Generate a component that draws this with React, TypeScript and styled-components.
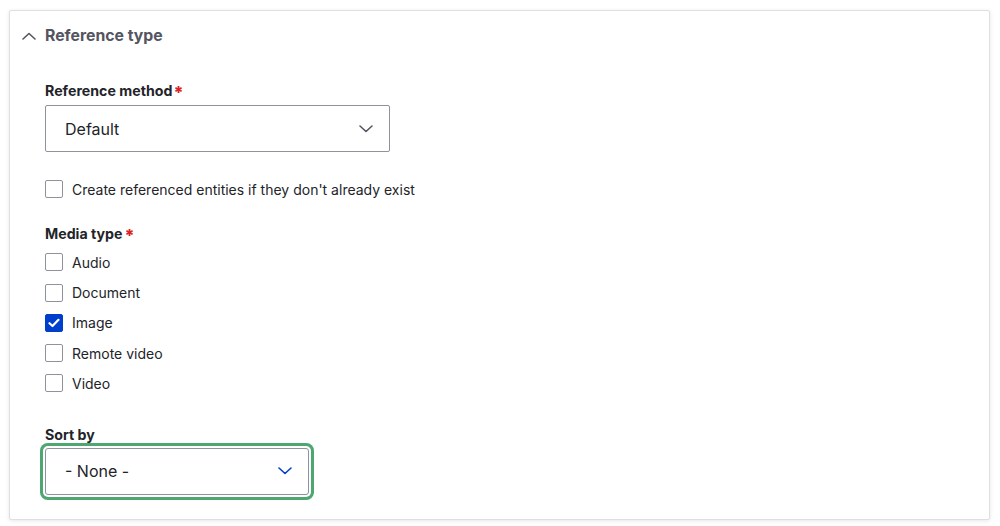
import React from "react";
import styled, { createGlobalStyle } from "styled-components";

const Global = createGlobalStyle`
  html, body { margin: 0; padding: 0; background: #ffffff; }
  body { font-family: Inter, "Liberation Sans", Arial, sans-serif; color: #232429; -webkit-font-smoothing: antialiased; }
  * { box-sizing: border-box; }
`;

const Page = styled.div`
  padding: 10px 10px 6px 9px;
`;

const Card = styled.section`
  border: 1px solid #dedfe4;
  border-radius: 2px;
  background: #fff;
  box-shadow: 0 1px 4px rgba(0, 0, 0, 0.1);
  height: 510px;
`;

const Summary = styled.div`
  display: flex;
  align-items: center;
  gap: 9px;
  height: 49px;
  padding-left: 12px;
  color: #545560;
  font-size: 15.8px;
  font-weight: 700;
`;

const Body = styled.div`
  display: flex;
  flex-direction: column;
  align-items: flex-start;
  padding: 22px 35px 0 35px;
`;

const Label = styled.div<{ $mt?: number; $mb?: number }>`
  display: flex;
  align-items: flex-start;
  gap: 3px;
  font-size: 14.2px;
  font-weight: 700;
  line-height: 18px;
  color: #232429;
  margin-top: ${(p) => p.$mt ?? 0}px;
  margin-bottom: ${(p) => p.$mb ?? 0}px;
`;

const Star = styled.svg`
  margin-top: 4px;
`;

const SelectWrap = styled.div<{ $w: number; $focus?: boolean }>`
  width: ${(p) => p.$w}px;
  height: 47px;
  border: 1px solid #8e929c;
  background: #fff;
  display: flex;
  align-items: center;
  justify-content: space-between;
  padding: 0 16px 0 19px;
  font-size: 16px;
  color: #232429;
  box-shadow: ${(p) => (p.$focus ? "0 0 0 2px #ffffff, 0 0 0 5px #4ea770" : "none")};
  border-radius: ${(p) => (p.$focus ? "3px" : "2px")};
`;

const CheckRow = styled.label<{ $mt?: number }>`
  display: flex;
  align-items: center;
  gap: 9px;
  height: 30.25px;
  font-size: 14px;
  color: #232429;
  margin-top: ${(p) => p.$mt ?? 0}px;
`;

const Box = styled.span<{ $checked?: boolean }>`
  width: 18px;
  height: 18px;
  border: 1px solid ${(p) => (p.$checked ? "#003ecc" : "#8e929c")};
  background: ${(p) => (p.$checked ? "#003ecc" : "#fff")};
  border-radius: 2px;
  display: flex;
  align-items: center;
  justify-content: center;
`;

const Chevron = ({ up, color }: { up?: boolean; color: string }) => (
  <svg width="14" height="8" viewBox="0 0 14 8" fill="none">
    <path
      d={up ? "M1 7 L7 1.5 L13 7" : "M1 1 L7 6.5 L13 1"}
      stroke={color}
      strokeWidth="1.6"
      strokeLinecap="round"
      strokeLinejoin="round"
    />
  </svg>
);

const Asterisk = () => (
  <Star width="7" height="7" viewBox="0 0 7 7">
    <g stroke="#dc2323" strokeWidth="1.8" strokeLinecap="butt">
      <line x1="3.5" y1="0" x2="3.5" y2="7" />
      <line x1="0.4" y1="1.75" x2="6.6" y2="5.25" />
      <line x1="0.4" y1="5.25" x2="6.6" y2="1.75" />
    </g>
  </Star>
);

const Check = ({ checked, label, mt }: { checked?: boolean; label: string; mt?: number }) => (
  <CheckRow $mt={mt}>
    <Box $checked={checked}>
      {checked && (
        <svg width="12" height="10" viewBox="0 0 12 10" fill="none">
          <path d="M1.5 5.2 L4.5 8 L10.5 1.8" stroke="#fff" strokeWidth="2.2" strokeLinecap="round" strokeLinejoin="round" />
        </svg>
      )}
    </Box>
    {label}
  </CheckRow>
);

export default function App() {
  return (
    <>
      <Global />
      <Page>
        <Card>
          <Summary>
            <Chevron up color="#545560" />
            Reference type
          </Summary>
          <Body>
            <Label $mb={5}>
              Reference method
              <Asterisk />
            </Label>
            <SelectWrap $w={345}>
              Default
              <Chevron color="#545560" />
            </SelectWrap>
            <Check label="Create referenced entities if they don't already exist" mt={22} />
            <Label $mt={21} $mb={4}>
              Media type
              <Asterisk />
            </Label>
            <Check label="Audio" />
            <Check label="Document" />
            <Check label="Image" checked />
            <Check label="Remote video" />
            <Check label="Video" />
            <Label $mt={27} $mb={4}>Sort by</Label>
            <SelectWrap $w={264} $focus>
              - None -
              <Chevron color="#003ecc" />
            </SelectWrap>
          </Body>
        </Card>
      </Page>
    </>
  );
}
